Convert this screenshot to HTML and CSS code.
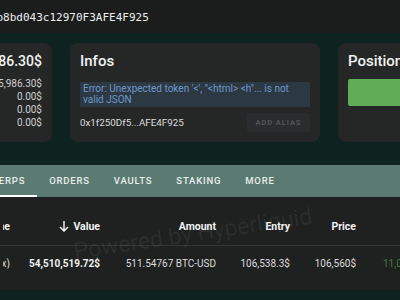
FILE: index.html
```html
<!DOCTYPE html>
<html lang="en">
<head>
    <meta charset="UTF-8">
    <meta name="viewport" content="width=device-width, initial-scale=1.0">
    <title>Wallet Overview</title>
    <link rel="stylesheet" href="styles.css">
</head>
<body>
    <header id="topbar">
        <span class="address">0x55b8bd043c12970F3AFE4F925</span>
    </header>

    <div id="cards">
        <section class="card card-balance">
            <div class="big-value">5,986.30$</div>
            <div class="line">5,986.30$</div>
            <div class="line">0.00$</div>
            <div class="line">0.00$</div>
            <div class="line">0.00$</div>
        </section>
        <section class="card card-infos">
            <h2>Infos</h2>
            <div class="error-box">Error: Unexpected token '&lt;', "&lt;html&gt; &lt;h"... is not valid JSON</div>
            <div class="alias-row">
                <span>0x1f250Df5...AFE4F925</span>
                <button class="alias-button">ADD ALIAS</button>
            </div>
        </section>
        <section class="card card-position">
            <h2>Position</h2>
            <div class="position-bar"></div>
        </section>
    </div>

    <nav id="tabs">
        <div class="tab active">PERPS</div>
        <div class="tab">ORDERS</div>
        <div class="tab">VAULTS</div>
        <div class="tab">STAKING</div>
        <div class="tab">MORE</div>
    </nav>

    <div id="table">
        <div class="row head">
            <div class="cell first"><span>Name</span></div>
            <div class="cell">
                <svg class="arrow" width="10" height="12" viewBox="0 0 10 12"><path d="M5 1v10M1 7l4 4 4-4" fill="none" stroke="#f0f0f0" stroke-width="1.5"/></svg>
                Value
            </div>
            <div class="cell">Amount</div>
            <div class="cell">Entry</div>
            <div class="cell">Price</div>
            <div class="cell pnl"></div>
        </div>
        <div class="row">
            <div class="cell first"><span>BTC (40x)</span></div>
            <div class="cell bold">54,510,519.72$</div>
            <div class="cell">511.54767 BTC-USD</div>
            <div class="cell">106,538.3$</div>
            <div class="cell">106,560$</div>
            <div class="cell pnl green">11,054.20$</div>
        </div>
        <div class="watermark">Powered by Hyperliquid</div>
    </div>
</body>
</html>
```

FILE: styles.css
```css
body {
    margin: 0;
    font-family: Roboto, "Noto Sans", sans-serif;
    background: #0e221f;
    color: #e6e6e6;
    overflow: hidden;
    width: 400px;
    height: 300px;
}
#topbar {
    height: 33px;
    background: #1b1d1d;
    display: flex;
    align-items: center;
    overflow: hidden;
}
#topbar .address {
    font-family: "DejaVu Sans Mono", monospace;
    font-size: 11px;
    color: #eeeeee;
    margin-left: -30px;
    margin-top: 1px;
    white-space: nowrap;
}
#cards {
    display: flex;
    gap: 18px;
    margin-top: 10px;
    height: 99px;
}
.card {
    background: #252727;
    border-radius: 8px;
    padding: 8px 10px;
    box-sizing: border-box;
    flex: 0 0 auto;
}
.card h2 {
    margin: 0;
    font-size: 15px;
    font-weight: 500;
    line-height: 20px;
    color: #f2f2f2;
}
.card-balance {
    width: 150px;
    margin-left: -98px;
    text-align: right;
    padding-right: 10px;
}
.big-value {
    font-size: 14px;
    font-weight: 500;
    line-height: 20px;
    color: #f2f2f2;
}
.card-balance .line {
    font-size: 10px;
    line-height: 13px;
    color: #d0d0d0;
}
.card-balance .big-value + .line {
    margin-top: 6px;
}
.card-infos {
    width: 250px;
}
.error-box {
    margin-top: 11px;
    background: #2c3842;
    color: #6c98cb;
    font-size: 10px;
    line-height: 11px;
    padding: 1px 3px 2px;
    height: 25px;
    box-sizing: border-box;
}
.alias-row {
    display: flex;
    justify-content: space-between;
    align-items: center;
    margin-top: 6px;
    font-size: 9.8px;
    color: #dddddd;
}
.alias-button {
    width: 63px;
    height: 19px;
    border: none;
    border-radius: 3px;
    background: #2a2d2d;
    color: #505454;
    font-family: Roboto, sans-serif;
    font-size: 7.5px;
    font-weight: 700;
    letter-spacing: 0.9px;
    padding: 0;
}
.card-position {
    width: 200px;
}
.position-bar {
    margin-top: 8px;
    height: 27px;
    background: #60ad57;
    border-radius: 2px;
}
#tabs {
    display: flex;
    margin-top: 23px;
    height: 32px;
    background: #5a7a72;
}
.tab {
    padding: 0 12px;
    font-size: 9.5px;
    font-weight: 500;
    letter-spacing: 0.8px;
    line-height: 31px;
    color: #e8eeec;
    border-bottom: 2px solid transparent;
    box-sizing: border-box;
    height: 32px;
}
.tab.active {
    border-bottom-color: #ffffff;
    margin-left: -28px;
    padding-left: 20px;
}
#table {
    position: relative;
    background: #1f2121;
    height: 93px;
    overflow: hidden;
}
.row {
    display: grid;
    grid-template-columns: 12px 88px 116px 74px 66px 1fr;
    height: 34px;
    align-items: center;
    font-size: 10px;
    color: #dcdcdc;
    white-space: nowrap;
}
.row.head {
    height: 38px;
    padding-top: 10px;
    border-bottom: 1px solid #323535;
    font-size: 10.5px;
    font-weight: 700;
    color: #f0f0f0;
}
.cell {
    text-align: right;
}
.cell.first {
    overflow: hidden;
    display: flex;
    justify-content: flex-end;
    padding-right: 2px;
    clip-path: inset(0 0 0 3px);
}
.cell.pnl {
    text-align: left;
    padding-left: 27px;
}
.arrow {
    vertical-align: -2px;
    margin-right: 2px;
}
.bold {
    font-weight: 700;
    color: #f2f2f2;
}
.green {
    color: #3f7d35;
}
.watermark {
    position: absolute;
    left: 76px;
    top: 41px;
    font-size: 23px;
    color: rgba(255, 255, 255, 0.06);
    transform: rotate(-8.5deg);
    transform-origin: left bottom;
    white-space: nowrap;
    pointer-events: none;
}
```
